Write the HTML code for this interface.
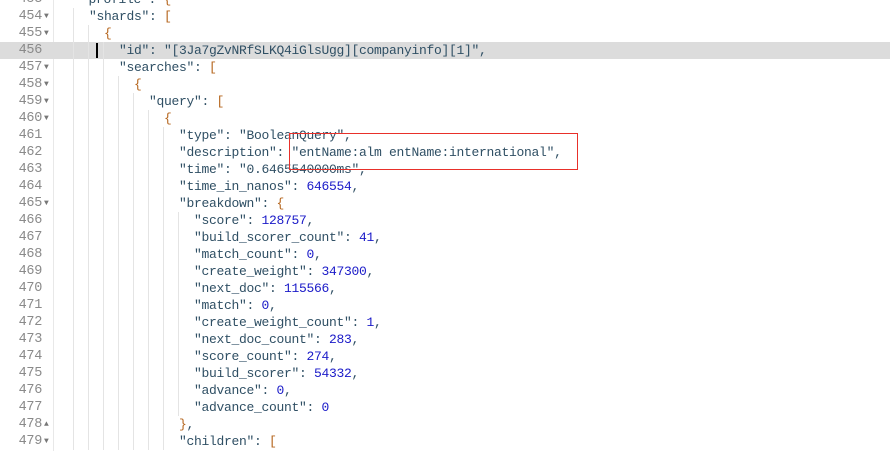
<!DOCTYPE html>
<html><head><meta charset="utf-8">
<style>
body{margin:0;width:890px;height:451px;overflow:hidden;background:#fff;position:relative;font-family:"Liberation Mono",monospace;font-size:13px}
.ln{position:absolute;left:0;width:890px;height:17px;line-height:17px}
.num{position:absolute;left:0;width:42px;color:#8a8a8a;text-align:right;font-size:13.5px;letter-spacing:-0.3px}
.fold{position:absolute;left:44px;font-size:8px;color:#777;top:0}
.code{position:absolute;white-space:pre;color:#2f4f64;letter-spacing:-0.3px}
.n{color:#1a1ac8}.b{color:#b5651d}
.g{position:absolute;width:1px;height:17px;background:#e4e4e4;top:0}
#gut{position:absolute;left:53px;top:0;width:1px;height:451px;background:#e8e8e8}
</style></head><body>
<div id="gut"></div>
<div id="c"></div>
<svg style="position:absolute;left:0;top:0;z-index:5" width="890" height="451"><rect x="289.5" y="133.5" width="288" height="36" fill="none" stroke="#e8302a" stroke-width="1"/></svg>
<script>
const L=[
[453,0,'"profile": <b>{</b>',0],
[454,1,'"shards": <b>[</b>',1],
[455,2,'<b>{</b>',1],
[456,3,'"id": "[3Ja7gZvNRfSLKQ4iGlsUgg][companyinfo][1]",',0],
[457,3,'"searches": <b>[</b>',1],
[458,4,'<b>{</b>',1],
[459,5,'"query": <b>[</b>',1],
[460,6,'<b>{</b>',1],
[461,7,'"type": "BooleanQuery",',0],
[462,7,'"description": "entName:alm entName:international",',0],
[463,7,'"time": "0.6465540000ms",',0],
[464,7,'"time_in_nanos": <n>646554</n>,',0],
[465,7,'"breakdown": <b>{</b>',1],
[466,8,'"score": <n>128757</n>,',0],
[467,8,'"build_scorer_count": <n>41</n>,',0],
[468,8,'"match_count": <n>0</n>,',0],
[469,8,'"create_weight": <n>347300</n>,',0],
[470,8,'"next_doc": <n>115566</n>,',0],
[471,8,'"match": <n>0</n>,',0],
[472,8,'"create_weight_count": <n>1</n>,',0],
[473,8,'"next_doc_count": <n>283</n>,',0],
[474,8,'"score_count": <n>274</n>,',0],
[475,8,'"build_scorer": <n>54332</n>,',0],
[476,8,'"advance": <n>0</n>,',0],
[477,8,'"advance_count": <n>0</n>',0],
[478,7,'<b>}</b>,',2],
[479,7,'"children": <b>[</b>',1]];
let h='';
for(const [n,l,t,f] of L){
 const top=16+(n-454)*17-8;
 const x=(n==453?81:74)+15*l;
 let g='';for(let k=0;k<l;k++)g+=`<div class="g" style="left:${73+15*k}px"></div>`;
 const bg=n==456?'background:#dcdcdc;':'';
 const tt=t.replace(/<b>/g,'<span class="b">').replace(/<\/b>/g,'</span>').replace(/<n>/g,'<span class="n">').replace(/<\/n>/g,'</span>');
 h+=`<div class="ln" style="top:${top}px;${bg}">${g}<span class="num">${n}</span>${f==1?'<span class="fold">▼</span>':f==2?'<span class="fold">▲</span>':''}<span class="code" style="left:${x}px">${tt}</span>${n==456?'<div style="position:absolute;left:96px;top:1px;width:2px;height:15px;background:#000"></div>':''}</div>`;
}
document.getElementById('c').innerHTML=h;
</script>
</body></html>
